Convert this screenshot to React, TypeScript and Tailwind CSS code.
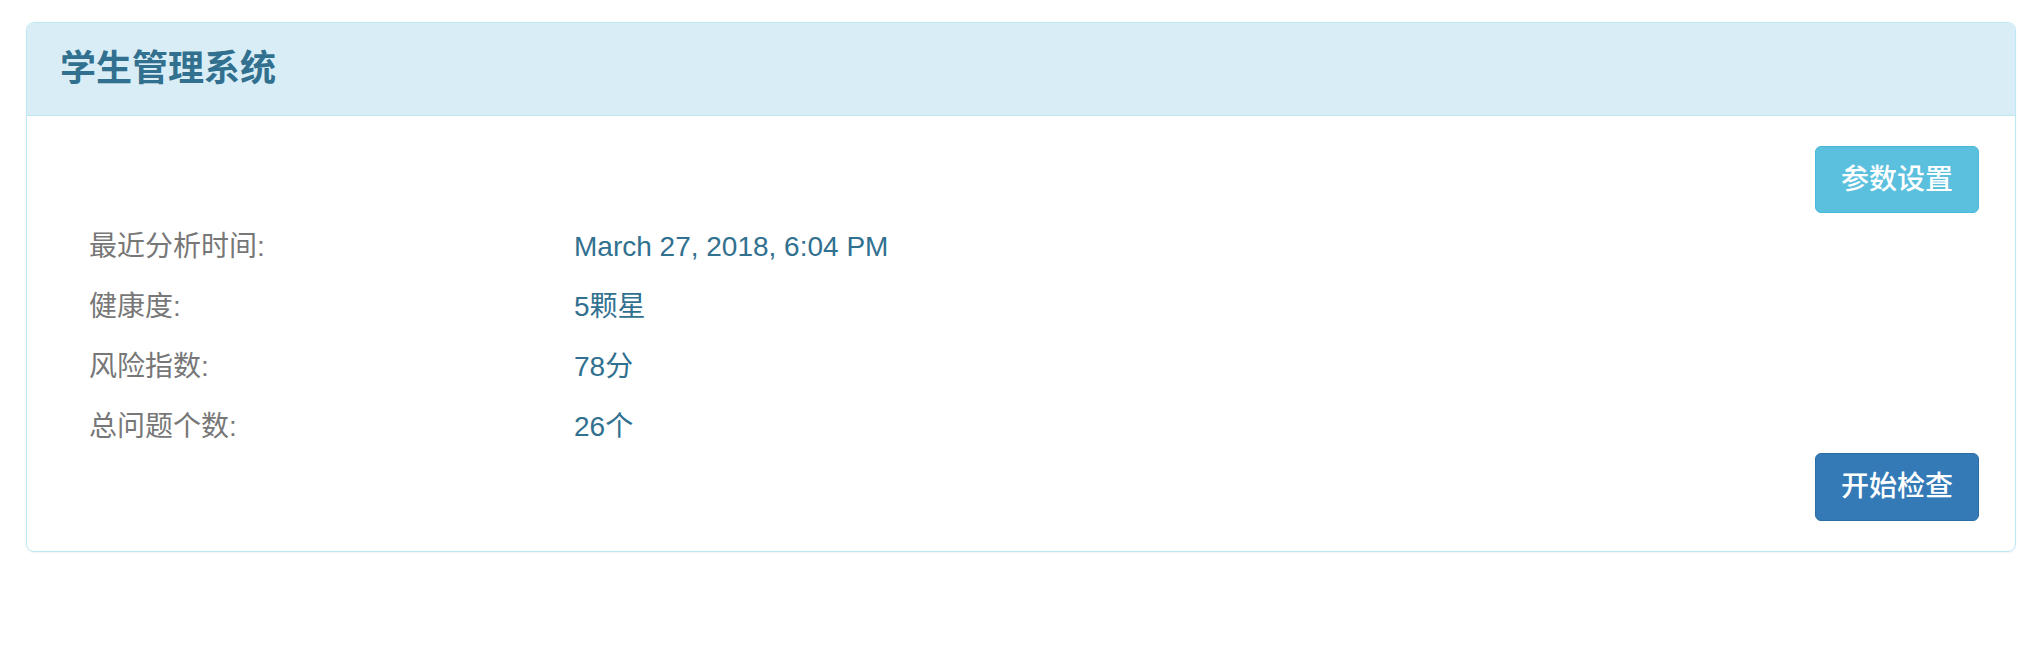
export default function App() {
  const rows: [string, string][] = [
    ["最近分析时间:", "March 27, 2018, 6:04 PM"],
    ["健康度:", "5颗星"],
    ["风险指数:", "78分"],
    ["总问题个数:", "26个"],
  ];
  return (
    <div
      className="w-[2038px] h-[648px] bg-white pt-[22px] pl-[26px]"
      style={{ fontFamily: '"Liberation Sans", "Noto Sans CJK SC", sans-serif' }}
    >
      <div className="w-[1990px] border border-[#bce8f1] rounded-[8px] shadow-[0_1px_2px_rgba(0,0,0,0.05)] overflow-hidden">
        <div className="h-[93px] bg-[#d9edf7] border-b border-[#bce8f1] pl-[33px] flex items-center">
          <h3 className="text-[36px] font-bold text-[#31708f] leading-none">学生管理系统</h3>
        </div>
        <div className="flex flex-col pt-[30px] pb-[30px] pr-[36px]">
          <div className="flex justify-end">
            <button className="w-[164px] h-[67px] bg-[#5bc0de] border border-[#46b8da] rounded-[6px] text-white text-[28px] font-medium flex items-center justify-center">
              参数设置
            </button>
          </div>
          <div className="flex flex-col">
            {rows.map(([k, v]) => (
              <div key={k} className="h-[60px] pt-[8px] flex items-center text-[28px]">
                <div className="w-[547px] pl-[62px] text-[#777777]">{k}</div>
                <div className="text-[#31708f]">{v}</div>
              </div>
            ))}
          </div>
          <div className="flex justify-end">
            <button className="w-[164px] h-[68px] bg-[#337ab7] border border-[#2e6da4] rounded-[6px] text-white text-[28px] font-medium flex items-center justify-center">
              开始检查
            </button>
          </div>
        </div>
      </div>
    </div>
  );
}
